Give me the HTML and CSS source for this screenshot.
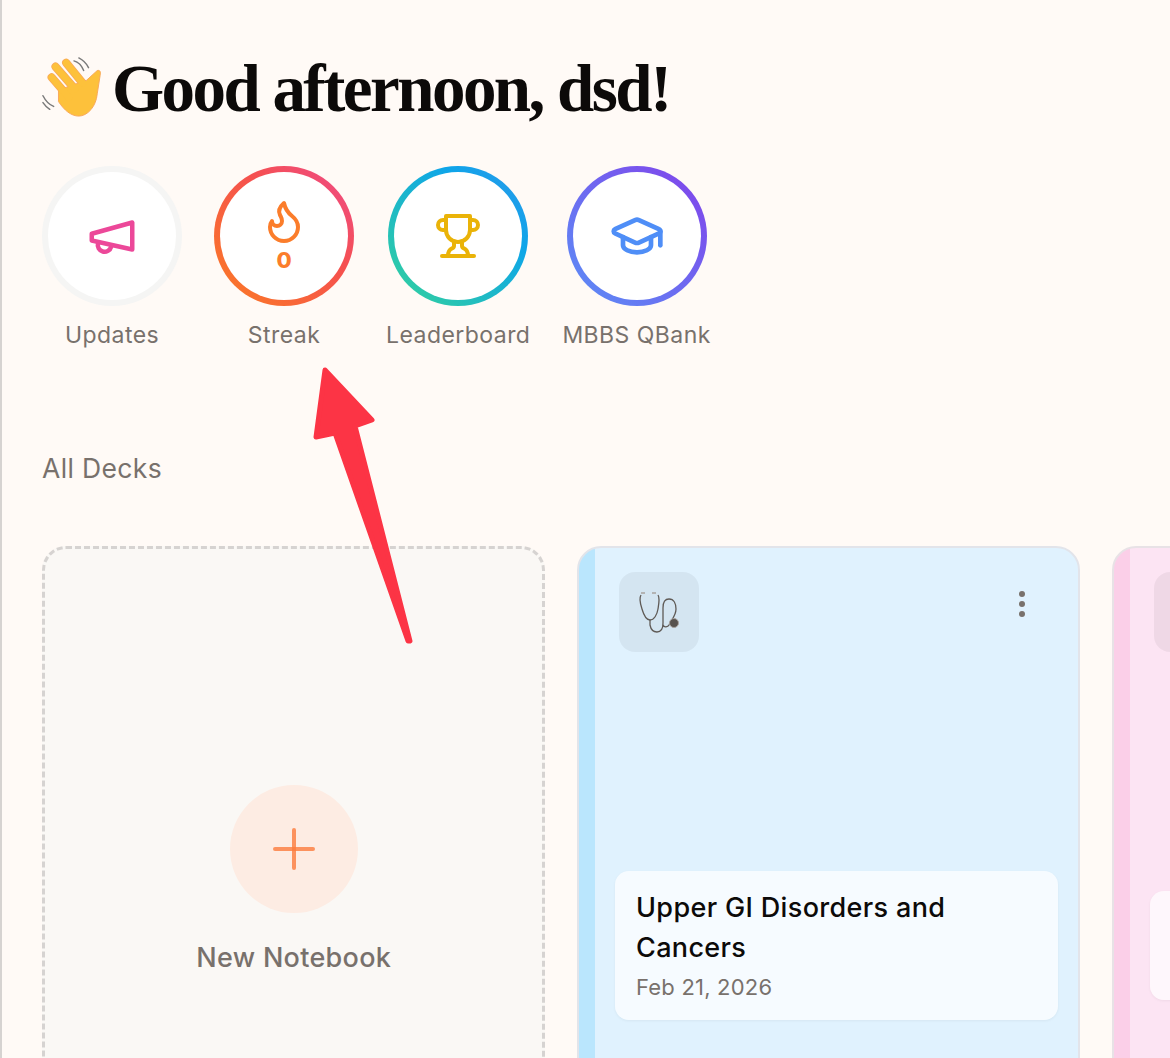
FILE: index.html
```html
<!DOCTYPE html>
<html lang="en">
<head>
    <meta charset="UTF-8">
    <meta name="viewport" content="width=device-width, initial-scale=1.0">
    <title>Dashboard</title>
    <link rel="stylesheet" href="styles.css">
</head>
<body>
    <div class="page">
        <h1 class="greeting">
            <svg class="wave" viewBox="0 0 64 64" aria-hidden="true">
                <g class="wave-lines">
                    <path d="M33 4c4 1 8 5 10 10"/>
                    <path d="M38 1c4 2 8 6 10 10"/>
                    <path d="M1 40c2 4 6 9 11 11"/>
                    <path d="M1 47c2 3 4 5 7 7"/>
                </g>
                <g class="fingers-edge">
                    <path d="M10 21 L28 42"/>
                    <path d="M14 10 L34 33"/>
                    <path d="M25 6 L42 27"/>
                </g>
                <path class="palm" d="M17 34 L46 24 L57 14 C60 13 61 16 60 19 L57 38 C56 51 47 61 38 61 C30 61 23 55 17 46 Z"/>
                <g class="fingers">
                    <path d="M10 21 L28 42"/>
                    <path d="M14 10 L34 33"/>
                    <path d="M25 6 L42 27"/>
                </g>
            </svg>
            <span>Good afternoon, dsd!</span>
        </h1>

        <div class="shortcuts">
            <div class="shortcut">
                <div class="ring ring-updates">
                    <div class="ring-inner">
                        <svg class="icon icon-pink" viewBox="0 0 24 24">
                            <path d="m3 11 18-5v12L3 14v-3z"/>
                            <path d="M11.6 16.8a3 3 0 1 1-5.8-1.6"/>
                        </svg>
                    </div>
                </div>
                <span class="shortcut-label">Updates</span>
            </div>
            <div class="shortcut">
                <div class="ring ring-streak">
                    <div class="ring-inner">
                        <svg class="icon-flame icon-orange" viewBox="0 0 24 24">
                            <path d="M8.5 14.5A2.5 2.5 0 0 0 11 12c0-1.38-.5-2-1-3-1.072-2.143-.224-4.054 2-6 .5 2.5 2 4.9 4 6.5 2 1.6 3 3.5 3 5.5a7 7 0 1 1-14 0c0-1.153.433-2.294 1-3a2.5 2.5 0 0 0 2.5 2.5z"/>
                        </svg>
                        <span class="streak-count">0</span>
                    </div>
                </div>
                <span class="shortcut-label">Streak</span>
            </div>
            <div class="shortcut">
                <div class="ring ring-leader">
                    <div class="ring-inner">
                        <svg class="icon-trophy icon-gold" viewBox="0 0 24 24">
                            <path d="M6 9H4.5a2.5 2.5 0 0 1 0-5H6"/>
                            <path d="M18 9h1.5a2.5 2.5 0 0 0 0-5H18"/>
                            <path d="M4 22h16"/>
                            <path d="M10 14.66V17c0 .55-.47.98-.97 1.21C7.85 18.75 7 20.24 7 22"/>
                            <path d="M14 14.66V17c0 .55.47.98.97 1.21C16.15 18.75 17 20.24 17 22"/>
                            <path d="M18 2H6v7a6 6 0 0 0 12 0V2Z"/>
                        </svg>
                    </div>
                </div>
                <span class="shortcut-label">Leaderboard</span>
            </div>
            <div class="shortcut">
                <div class="ring ring-qbank">
                    <div class="ring-inner">
                        <svg class="icon-cap icon-blue" viewBox="0 0 24 24">
                            <path d="M21.42 10.922a1 1 0 0 0-.019-1.838L12.83 5.18a2 2 0 0 0-1.66 0L2.6 9.08a1 1 0 0 0 0 1.832l8.57 3.908a2 2 0 0 0 1.66 0z"/>
                            <path d="M22 10v6"/>
                            <path d="M6 12.5V16a6 3 0 0 0 12 0v-3.5"/>
                        </svg>
                    </div>
                </div>
                <span class="shortcut-label">MBBS QBank</span>
            </div>
        </div>

        <h2 class="section-title">All Decks</h2>

        <div class="decks">
            <div class="deck deck-new">
                <div class="plus-circle">
                    <span class="plus-h"></span>
                    <span class="plus-v"></span>
                </div>
                <span class="new-label">New Notebook</span>
            </div>

            <div class="deck deck-blue">
                <div class="deck-top">
                    <div class="deck-icon">
                        <svg class="scope" viewBox="0 0 80 80" aria-hidden="true">
                            <path class="scope-tube" d="M22 23c-2 3-1 8 1 14 2 7 5 11 8 11 4 0 7-5 8-11 1-6 2-11 0-14"/>
                            <path class="scope-tube" d="M31 48v5c1 5 4 7 7 7 4 0 6-3 6-9V36c0-6 2-9 6-9 5 0 7 5 7 10 0 7-5 11-7 16-1 2-5 3-6 0"/>
                            <path class="scope-ear" d="M22 21h4M33 21h4"/>
                            <circle class="scope-head" cx="55" cy="51" r="4.5"/>
                        </svg>
                    </div>
                    <div class="dots"><i></i><i></i><i></i></div>
                </div>
                <div class="deck-foot">
                    <div class="deck-info">
                        <div class="deck-title">Upper GI Disorders and Cancers</div>
                        <div class="deck-date">Feb 21, 2026</div>
                    </div>
                </div>
            </div>

            <div class="deck deck-pink">
                <div class="deck-top">
                    <div class="deck-icon"></div>
                </div>
                <div class="deck-foot">
                    <div class="deck-info deck-info-short"></div>
                </div>
            </div>
        </div>

        <!-- annotation arrow on top of the screenshot -->
        <svg class="arrow" viewBox="0 0 1170 1058" aria-hidden="true">
            <path d="M325 370 L372 420 L355 426 L410 641 L408 641 L335 433 L316 437 Z"/>
        </svg>
    </div>
</body>
</html>
```

FILE: styles.css
```css
* {
    box-sizing: border-box;
}
html, body {
    margin: 0;
    height: 100%;
}
body {
    font-family: 'Inter', 'Liberation Sans', sans-serif;
    background: #fffaf6;
    color: #0c0a09;
}
.page {
    position: relative;
    width: 1170px;
    height: 1058px;
    overflow: hidden;
    border-left: 2px solid #d6d3d1;
    padding: 58px 0 0 40px;
}
.greeting {
    display: flex;
    align-items: center;
    gap: 8px;
    height: 60px;
    margin: 0;
    font-family: 'Liberation Serif', serif;
    font-weight: 700;
    font-size: 67px;
    letter-spacing: -2.55px;
    color: #0c0a09;
}
.wave {
    width: 62px;
    height: 62px;
    flex: none;
}
.wave-lines {
    fill: none;
    stroke: #7a7a7a;
    stroke-width: 1.5;
    stroke-linecap: round;
}
.palm {
    fill: #fdc13b;
    stroke: #f8a85a;
    stroke-width: 1;
}
.fingers {
    fill: none;
    stroke: #fdc13b;
    stroke-width: 7;
    stroke-linecap: round;
}
.fingers-edge {
    fill: none;
    stroke: #f8a85a;
    stroke-width: 8.5;
    stroke-linecap: round;
}

/* top shortcuts */
.shortcuts {
    display: flex;
    gap: 32px;
    margin-top: 48px;
}
.shortcut {
    display: flex;
    flex-direction: column;
    align-items: center;
    gap: 15px;
}
.ring {
    width: 140px;
    height: 140px;
    padding: 6px;
    border-radius: 50%;
}
.ring-inner {
    width: 100%;
    height: 100%;
    border-radius: 50%;
    background: #fff;
    display: flex;
    flex-direction: column;
    align-items: center;
    justify-content: center;
}
.ring-updates { background: #f5f5f4; }
.ring-streak { background: linear-gradient(45deg, #fb7d22, #f5504f 60%, #ee4a8c); }
.ring-leader { background: linear-gradient(45deg, #34d399, #0ea5e9 70%, #2f96ea); }
.ring-qbank { background: linear-gradient(45deg, #5a8ff6, #7c4dec 85%); }
.ring svg {
    fill: none;
    stroke-width: 2;
    stroke-linecap: round;
    stroke-linejoin: round;
}
.icon { width: 54px; height: 54px; }
.icon-cap { width: 56px; height: 56px; }
.icon-flame { width: 48px; height: 48px; margin-bottom: 4px; }
.icon-trophy { width: 48px; height: 48px; }
.icon-pink { stroke: #ec4899; }
.icon-orange { stroke: #fb7d2b; }
.icon-gold { stroke: #eab308; }
.icon-blue { stroke: #4f8ef7; }
.streak-count {
    margin-bottom: 4px;
    font-size: 22px;
    line-height: 22px;
    font-weight: 800;
    color: #fb7d2b;
}
.shortcut-label {
    font-size: 23px;
    line-height: 28px;
    letter-spacing: 0.45px;
    color: #78716c;
}

.section-title {
    margin: 103px 0 0;
    font-size: 26.5px;
    line-height: 32px;
    letter-spacing: 0.35px;
    font-weight: 400;
    color: #78716c;
}

/* deck cards */
.decks {
    display: grid;
    grid-template-columns: repeat(3, 502.5px);
    gap: 32.5px;
    margin-top: 62px;
}
.deck {
    height: 700px;
    border-radius: 24px;
    display: flex;
    flex-direction: column;
}
.deck-new {
    background: #faf8f5;
    border: 3px dashed #d6d3d1;
    align-items: center;
    justify-content: center;
    padding: 0 0 33px 1px;
}
.plus-circle {
    position: relative;
    width: 128px;
    height: 128px;
    border-radius: 50%;
    background: #fdece3;
}
.plus-h, .plus-v {
    position: absolute;
    background: #fb7c3c;
    opacity: 0.8;
    border-radius: 2px;
}
.plus-h { left: 43px; top: 62px; width: 42px; height: 4px; }
.plus-v { left: 62px; top: 43px; width: 4px; height: 42px; }
.new-label {
    margin-top: 28px;
    font-size: 27px;
    line-height: 34px;
    letter-spacing: 0.3px;
    font-weight: 500;
    color: #78716c;
}
.deck-blue {
    background: linear-gradient(90deg, #bae6fd 16px, #e0f2fe 16px);
    border: 2px solid #e2e4ea;
}
.deck-pink {
    background: linear-gradient(90deg, #fbcfe8 16px, #fce4f3 16px);
    border: 2px solid #e8e2e6;
}
.deck-top {
    display: flex;
    justify-content: space-between;
    padding: 24px 53px 0 40px;
}
.deck-icon {
    width: 80px;
    height: 80px;
    border-radius: 16px;
    background: rgba(0, 0, 0, 0.05);
}
.scope {
    display: block;
    width: 80px;
    height: 80px;
}
.scope-tube {
    fill: none;
    stroke: #5f5a56;
    stroke-width: 1.3;
}
.scope-ear {
    fill: none;
    stroke: #a8a29e;
    stroke-width: 1.5;
}
.scope-head {
    fill: #57524e;
    stroke: #a8a29e;
    stroke-width: 1;
}
.dots {
    display: flex;
    flex-direction: column;
    gap: 4px;
    padding-top: 19px;
}
.dots i {
    width: 6px;
    height: 6px;
    border-radius: 50%;
    background: #78716c;
}
.deck-foot {
    flex: 1;
    display: flex;
    align-items: center;
    padding: 0 20px 5px 36px;
}
.deck-info {
    width: 100%;
    padding: 17px 21px 18px;
    border-radius: 14px;
    background: rgba(255, 255, 255, 0.7);
    box-shadow: 0 1px 3px rgba(0, 0, 0, 0.05);
}
.deck-info-short {
    height: 109px;
}
.deck-title {
    font-size: 27px;
    line-height: 40px;
    letter-spacing: 0.35px;
    font-weight: 450;
    color: #0c0a09;
}
.deck-date {
    margin-top: 4px;
    font-size: 22px;
    line-height: 30px;
    letter-spacing: 0.2px;
    color: #78716c;
}

.arrow {
    position: absolute;
    left: -2px;
    top: 0;
    width: 1170px;
    height: 1058px;
    fill: #fc3445;
    stroke: #fc3445;
    stroke-width: 5;
    stroke-linejoin: round;
    pointer-events: none;
}
```
